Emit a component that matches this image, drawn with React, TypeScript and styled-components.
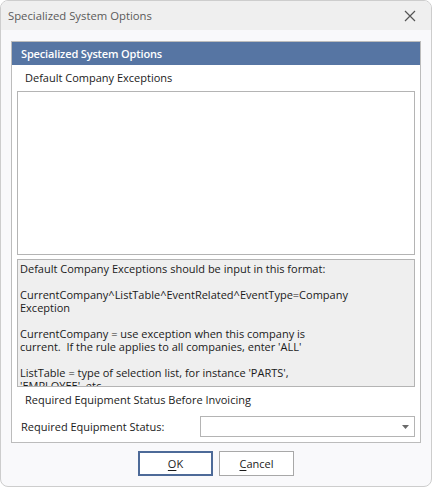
import React from 'react';
import styled, { createGlobalStyle } from 'styled-components';

const FONT = '"Open Sans", "Noto Sans", "DejaVu Sans", sans-serif';

const GlobalStyle = createGlobalStyle`
  html, body {
    margin: 0;
    padding: 0;
    background: #ffffff;
  }
  body {
    font-family: ${FONT};
    font-size: 11px;
    color: #1a1a1a;
  }
`;

const INFO_LINES = [
  'Default Company Exceptions should be input in this format:',
  '',
  'CurrentCompany^ListTable^EventRelated^EventType=Company',
  'Exception',
  '',
  'CurrentCompany = use exception when this company is',
  "current.  If the rule applies to all companies, enter 'ALL'",
  '',
  "ListTable = type of selection list, for instance 'PARTS',",
  "'EMPLOYEE', etc.",
];

const App: React.FC = () => {
  return (
    <>
      <GlobalStyle />
      <Window>
        <TitleBar>
          <TitleText>Specialized System Options</TitleText>
          <CloseButton aria-label="Close">
            <svg width="12" height="12" viewBox="0 0 12 12">
              <path d="M1 1 L11 11 M11 1 L1 11" stroke="#555" strokeWidth="1.2" />
            </svg>
          </CloseButton>
        </TitleBar>
        <Body>
          <Group>
            <GroupHeader>Specialized System Options</GroupHeader>
            <GroupBody>
              <SectionLabel>Default Company Exceptions</SectionLabel>
              <ExceptionsBox />
              <InfoBox>
                {INFO_LINES.map((line, i) => (
                  <InfoLine key={i}>{line || '\u00a0'}</InfoLine>
                ))}
              </InfoBox>
              <SectionLabel>Required Equipment Status Before Invoicing</SectionLabel>
              <FieldRow>
                <FieldLabel>Required Equipment Status:</FieldLabel>
                <Select>
                  <svg width="7" height="4" viewBox="0 0 7 4">
                    <path d="M0 0 L7 0 L3.5 4 Z" fill="#6a6a6a" />
                  </svg>
                </Select>
              </FieldRow>
            </GroupBody>
          </Group>
          <ButtonRow>
            <DialogButton primary>
              <u>O</u>K
            </DialogButton>
            <DialogButton>
              <u>C</u>ancel
            </DialogButton>
          </ButtonRow>
        </Body>
      </Window>
    </>
  );
};

export default App;

const Window = styled.div`
  width: 432px;
  height: 487px;
  box-sizing: border-box;
  border: 1px solid #cdcdcd;
  border-radius: 8px;
  overflow: hidden;
  display: flex;
  flex-direction: column;
  background: #f9f9fb;
`;

const TitleBar = styled.div`
  height: 29px;
  flex-shrink: 0;
  display: flex;
  align-items: center;
  justify-content: space-between;
  padding: 0 13px 0 7px;
  background: #efefef;
`;

const TitleText = styled.span`
  font-size: 11.3px;
  color: #5a5a5a;
  padding-bottom: 1px;
`;

const CloseButton = styled.div`
  display: flex;
  align-items: center;
  justify-content: center;
  width: 16px;
  height: 16px;
`;

const Body = styled.div`
  flex: 1;
  display: flex;
  flex-direction: column;
  padding: 11px 10px 0 10px;
`;

const Group = styled.div`
  border: 1px solid #bcbcbc;
  background: #ffffff;
`;

const GroupHeader = styled.div`
  height: 23px;
  background: #5675a3;
  color: #ffffff;
  font-weight: 600;
  font-size: 11px;
  letter-spacing: -0.15px;
  line-height: 23px;
  padding-left: 9px;
`;

const GroupBody = styled.div`
  display: flex;
  flex-direction: column;
  padding: 0 5px 5px 5px;
`;

const SectionLabel = styled.div`
  height: 26px;
  line-height: 26px;
  padding-left: 8px;
  color: #1a1a1a;
`;

const ExceptionsBox = styled.div`
  height: 164px;
  box-sizing: border-box;
  border: 1px solid #b4b4b4;
  background: #ffffff;
  margin-bottom: 4px;
`;

const InfoBox = styled.div`
  height: 128px;
  box-sizing: border-box;
  border: 1px solid #b4b4b4;
  background: #efefef;
  padding: 2px 2px 0 2px;
  overflow: hidden;
`;

const InfoLine = styled.div`
  height: 13px;
  line-height: 13px;
  white-space: pre;
  color: #1a1a1a;
`;

const FieldRow = styled.div`
  display: flex;
  align-items: center;
  justify-content: space-between;
  height: 21px;
  margin-top: 3px;
`;

const FieldLabel = styled.span`
  padding-left: 4px;
  color: #1a1a1a;
`;

const Select = styled.div`
  width: 215px;
  height: 21px;
  box-sizing: border-box;
  border: 1px solid #b4b4b4;
  background: #ffffff;
  display: flex;
  align-items: center;
  justify-content: flex-end;
  padding-right: 5px;
`;

const ButtonRow = styled.div`
  display: flex;
  justify-content: center;
  gap: 6px;
  margin-top: 8px;
`;

const DialogButton = styled.div<{ primary?: boolean }>`
  width: 75px;
  height: 25px;
  box-sizing: border-box;
  display: flex;
  align-items: center;
  justify-content: center;
  background: #ffffff;
  color: #1a1a1a;
  border: ${p => (p.primary ? '2px solid #4d6a98' : '1px solid #a8a8a8')};
  u {
    text-decoration-thickness: 1px;
    text-underline-offset: 2px;
  }
`;
